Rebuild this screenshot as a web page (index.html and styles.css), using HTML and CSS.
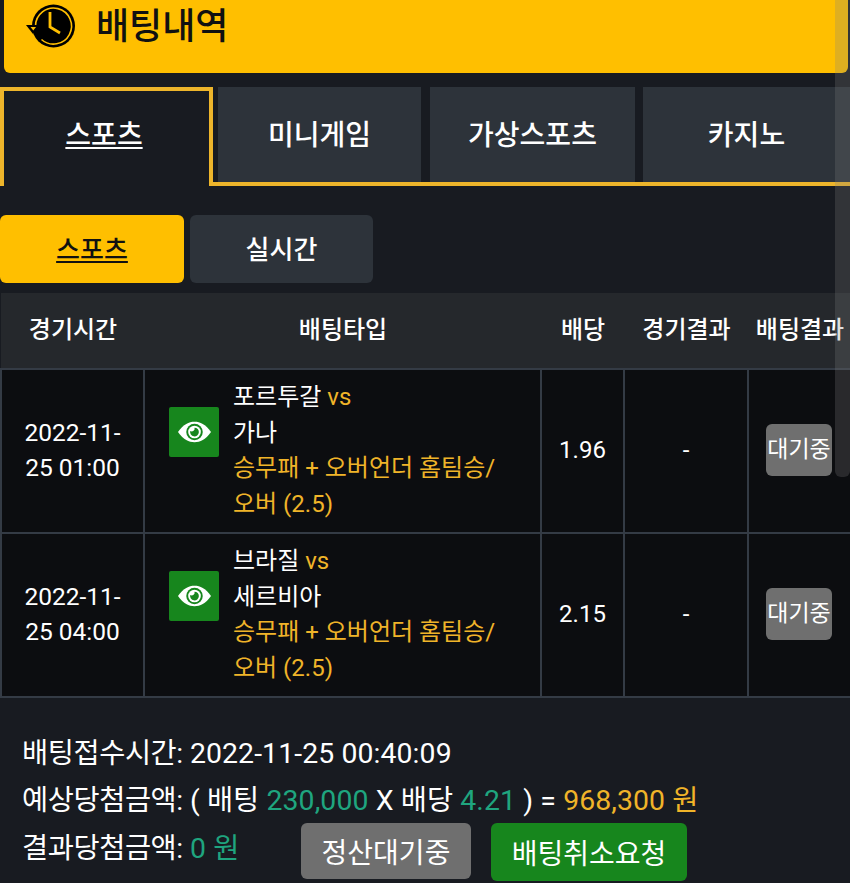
FILE: index.html
```html
<!DOCTYPE html>
<html lang="ko">

<head>
    <meta charset="utf-8">
    <meta name="viewport" content="width=device-width, initial-scale=1.0">
    <title>배팅내역</title>
    <link rel="stylesheet" href="styles.css">
</head>

<body>

    <header class="title_bar">
        <svg class="title_icon" viewBox="0 0 50 46" aria-hidden="true">
            <circle cx="27.5" cy="22" r="21.500" fill="#000"></circle>
            <path d="M9.500 22a18 18 0 1 1 6 13.500" fill="none" stroke="#ffbf00" stroke-width="1.600"></path>
            <path d="M0 21h14l-7 9z" fill="#000"></path>
            <path d="M4.500 23h5.500l-2.700 3.500z" fill="#ffbf00"></path>
            <path d="M24 8v15l10 6" fill="none" stroke="#ffbf00" stroke-width="2.800"></path>
        </svg>
        <h1>배팅내역</h1>
    </header>

    <nav class="main_tabs">
        <a class="valgt">스포츠</a>
        <a>미니게임</a>
        <a>가상스포츠</a>
        <a>카지노</a>
    </nav>

    <nav class="sub_tabs">
        <a class="valgt">스포츠</a>
        <a>실시간</a>
    </nav>

    <table class="bet_table">
        <colgroup>
            <col class="col_time">
            <col class="col_type">
            <col class="col_odds">
            <col class="col_game">
            <col class="col_result">
        </colgroup>
        <thead>
            <tr>
                <th>경기시간</th>
                <th>배팅타입</th>
                <th>배당</th>
                <th>경기결과</th>
                <th>배팅결과</th>
            </tr>
        </thead>
        <tbody>
            <tr>
                <td class="date">2022-11-<br>25 01:00</td>
                <td>
                    <div class="match">
                        <span class="eye">
                            <svg viewBox="0 0 36 24" aria-hidden="true">
                                <path d="M1 12C7 4 12 1.500 18 1.500S29 4 35 12c-6 8-11 10.500-17 10.500S7 20 1 12z" fill="#fff"></path>
                                <circle cx="18" cy="12" r="8.500" fill="#17861d"></circle>
                                <circle cx="18" cy="12" r="6.500" fill="#fff"></circle>
                                <path d="M18 7.500a4.500 4.500 0 1 1-4.400 3.500 3 3 0 0 0 4.400-3.500z" fill="#17861d"></path>
                            </svg>
                        </span>
                        <p>포르투갈 <span class="gold">vs</span><br>가나<br><span class="gold">승무패 + 오버언더 홈팀승/<br>오버 (2.5)</span></p>
                    </div>
                </td>
                <td>1.96</td>
                <td>-</td>
                <td><span class="wait">대기중</span></td>
            </tr>
            <tr>
                <td class="date">2022-11-<br>25 04:00</td>
                <td>
                    <div class="match">
                        <span class="eye">
                            <svg viewBox="0 0 36 24" aria-hidden="true">
                                <path d="M1 12C7 4 12 1.500 18 1.500S29 4 35 12c-6 8-11 10.500-17 10.500S7 20 1 12z" fill="#fff"></path>
                                <circle cx="18" cy="12" r="8.500" fill="#17861d"></circle>
                                <circle cx="18" cy="12" r="6.500" fill="#fff"></circle>
                                <path d="M18 7.500a4.500 4.500 0 1 1-4.400 3.500 3 3 0 0 0 4.400-3.500z" fill="#17861d"></path>
                            </svg>
                        </span>
                        <p>브라질 <span class="gold">vs</span><br>세르비아<br><span class="gold">승무패 + 오버언더 홈팀승/<br>오버 (2.5)</span></p>
                    </div>
                </td>
                <td>2.15</td>
                <td>-</td>
                <td><span class="wait">대기중</span></td>
            </tr>
        </tbody>
    </table>

    <section class="summary">
        <p><span class="label">배팅접수시간:</span> 2022-11-25 00:40:09</p>
        <p><span class="label">예상당첨금액:</span> ( 배팅 <span class="green">230,000</span> X 배당 <span class="green">4.21</span> ) = <span class="gold">968,300 원</span></p>
        <div class="summary_last">
            <p class="result_amount"><span class="label">결과당첨금액:</span> <span class="green">0 원</span></p>
            <button class="btn_grey">정산대기중</button>
            <button class="btn_green">배팅취소요청</button>
        </div>
    </section>

    <div class="scroll_thumb"></div>

</body></html>
```

FILE: styles.css
```css
* {
    margin: 0;
    padding: 0;
    box-sizing: border-box;
}

html,
body {
    height: 883px;
    overflow: hidden;
}

body {
    position: relative;
    background-color: #181b21;
    color: #fff;
    font-family: Roboto, "Noto Sans CJK KR", sans-serif;
}

a {
    cursor: pointer;
}

.gold {
    color: #f0b429;
}

.green {
    color: #1fa57f;
}

.title_bar {
    display: flex;
    align-items: flex-start;
    height: 73px;
    margin: 0 2px 0 4px;
    padding: 4px 0 0 22px;
    background-color: #ffbf00;
    border-radius: 0 0 6px 6px;
    color: #111;
}

.title_icon {
    width: 50px;
    height: 46px;
}

.title_bar h1 {
    margin-left: 20px;
    font-size: 36px;
    font-weight: 500;
    line-height: 46px;
}

.main_tabs {
    display: flex;
    align-items: flex-start;
    height: 99px;
    margin-top: 14px;
    border-bottom: 4px solid #edb52b;
}

.main_tabs a {
    display: flex;
    align-items: center;
    justify-content: center;
    width: 203px;
    height: 95px;
    margin-left: 5px;
    padding-bottom: 3px;
    background-color: #2d333a;
    font-size: 28px;
    font-weight: 500;
}

.main_tabs a:nth-child(3) {
    width: 205px;
    margin-left: 9px;
}

.main_tabs a:nth-child(4) {
    width: 207px;
    margin-left: 8px;
}

.main_tabs a.valgt {
    width: 213px;
    height: 99px;
    margin-left: 0;
    padding: 0 5px 11px 0;
    border: 4px solid #edb52b;
    border-bottom: 0;
    background-color: #181b21;
    text-decoration: underline;
    text-underline-offset: 2px;
}

.sub_tabs {
    display: flex;
    gap: 6px;
    margin-top: 29px;
}

.sub_tabs a {
    display: flex;
    align-items: center;
    justify-content: center;
    width: 183px;
    height: 68px;
    padding-bottom: 4px;
    border-radius: 6px;
    background-color: #2d333a;
    font-size: 26px;
    font-weight: 500;
}

.sub_tabs a.valgt {
    width: 184px;
    background-color: #ffbf00;
    color: #111;
    text-decoration: underline;
    text-underline-offset: 2px;
}

.bet_table {
    width: 850px;
    margin-top: 10px;
    table-layout: fixed;
    border-collapse: collapse;
}

.col_time {
    width: 143px;
}

.col_type {
    width: 397px;
}

.col_odds {
    width: 83px;
}

.col_game {
    width: 124px;
}

.col_result {
    width: 103px;
}

.bet_table th {
    height: 76px;
    padding: 0 0 6px 1px;
    background-color: #25282c;
    font-size: 24px;
    font-weight: 500;
    white-space: nowrap;
}

.bet_table td {
    height: 164px;
    padding: 0;
    border: 2px solid #343b45;
    background-color: #0c0d10;
    font-size: 24px;
    line-height: 35.500px;
    text-align: center;
}

.bet_table td.date {
    padding-bottom: 2px;
    font-size: 24.500px;
}

.bet_table td:last-child {
    padding: 0 2px 2px 0;
    border-right: 0;
}

.match {
    display: flex;
    align-items: flex-start;
    gap: 14px;
    padding-left: 24px;
    text-align: left;
}

.match p {
    white-space: nowrap;
}

.eye {
    display: flex;
    align-items: center;
    justify-content: center;
    flex-shrink: 0;
    width: 50px;
    height: 50px;
    margin-top: 27px;
    border-radius: 2px;
    background-color: #17861d;
}

.eye svg {
    width: 35px;
    height: 24px;
}

.wait {
    display: inline-block;
    width: 66px;
    height: 52px;
    border-radius: 6px;
    background-color: #6f6f6f;
    font-size: 23px;
    line-height: 52px;
    white-space: nowrap;
}

.summary {
    padding: 32px 0 0 22px;
    font-size: 28.400px;
    line-height: 47px;
    letter-spacing: 0.1px;
}

.label {
    letter-spacing: -0.4px;
}

.summary_last {
    display: flex;
    align-items: flex-start;
}

.result_amount {
    width: 279px;
    line-height: 50px;
}

.summary button {
    border: 0;
    border-radius: 6px;
    color: #fff;
    font-family: inherit;
    font-size: 28px;
    margin-top: -1px;
}

.btn_grey {
    width: 170px;
    height: 56px;
    margin-right: 20px;
    background-color: #6f6f6f;
}

.btn_green {
    width: 196px;
    height: 58px;
    background-color: #17861d;
}

.scroll_thumb {
    position: absolute;
    top: 0;
    right: 0;
    width: 15px;
    height: 477px;
    border-radius: 0 0 6px 6px;
    background-color: rgba(128, 128, 128, 0.25);
}
```
